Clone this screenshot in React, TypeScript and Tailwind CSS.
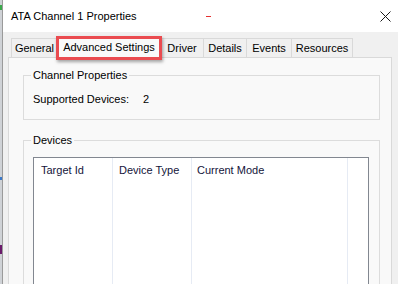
import React from "react";

const font = { fontFamily: '"Liberation Sans", Arial, sans-serif' };

const tabs = [
  { label: "General", w: "w-[47px]" },
  { label: "Advanced Settings", w: "w-[104px]", active: true },
  { label: "Driver", w: "w-[44px]" },
  { label: "Details", w: "w-[44px]" },
  { label: "Events", w: "w-[46px]" },
  { label: "Resources", w: "w-[62px]" },
];

function CloseIcon() {
  return (
    <svg width="11" height="11" viewBox="0 0 11 11" className="block">
      <path d="M0.5 0.5 L10.5 10.5 M10.5 0.5 L0.5 10.5" stroke="#1a1a1a" strokeWidth="1" fill="none" />
    </svg>
  );
}

function Tabs() {
  return (
    <div className="flex items-end h-[21px] pl-[3px]">
      {tabs.map((t, i) =>
        t.active ? (
          <div
            key={t.label}
            className={`relative z-10 -ml-px -mb-px h-[22px] ${t.w} flex items-center justify-center border border-b-0 border-[#d9d9d9] bg-[#f9f9f9] text-[11px] text-black`}
          >
            {t.label}
            <div className="absolute -left-[2px] -right-[2px] -top-[1px] -bottom-[2px] border-[3px] border-[#ea4b50] shadow-[1px_2px_3px_rgba(0,0,0,0.35)]" />
          </div>
        ) : (
          <div
            key={t.label}
            className={`${i > 0 ? "-ml-px" : ""} h-[19px] ${t.w} flex items-center justify-center border border-b-0 border-[#d9d9d9] bg-[#f0f0f0] text-[11px] text-black`}
          >
            {t.label}
          </div>
        )
      )}
    </div>
  );
}

function ListView() {
  const cols = [
    { label: "Target Id", w: "w-[79px]", pl: "pl-[7px]" },
    { label: "Device Type", w: "w-[79px]", pl: "pl-[6px]" },
    { label: "Current Mode", w: "w-[156px]", pl: "pl-[5px]" },
  ];
  return (
    <div className="ml-[9px] mr-[10px] mt-[10px] h-[200px] flex border border-[#828790] bg-white">
      {cols.map((c) => (
        <div key={c.label} className={`${c.w} shrink-0 border-r border-[#e6ebf4] flex flex-col`}>
          <div className={`h-[25px] flex items-center ${c.pl} text-[11px] text-[#14143a]`}>{c.label}</div>
        </div>
      ))}
      <div className="flex-1" />
    </div>
  );
}

export default function App() {
  return (
    <div className="w-[398px] h-[284px] overflow-hidden flex bg-[#f0f0f0]" style={font}>
      <div className="w-[2px] shrink-0 flex flex-col bg-[#cfd2d6]">
        <div className="h-[5px]" />
        <div className="h-[5px] bg-[#3aa84a]" />
        <div className="h-[167px]" />
        <div className="h-[3px] bg-[#3b78c8]" />
        <div className="h-[65px]" />
        <div className="h-[9px] bg-[#6a1a6a]" />
      </div>
      <div className="flex-1 flex flex-col border-l border-[#9a9a9a]">
        <div className="relative h-[32px] shrink-0 flex items-center justify-between bg-white pl-[8px] pr-[7px]">
          <span className="text-[11px] text-black">ATA Channel 1 Properties</span>
          <div className="absolute left-[203px] top-[16px] w-[5px] h-[1px] bg-[#e53030]" />
          <CloseIcon />
        </div>
        <div className="flex-1 flex flex-col pt-[4px] pl-[5px] pr-[6px]">
          <Tabs />
          <div className="flex-1 flex flex-col border border-[#d9d9d9] bg-[#f9f9f9] pt-[10px] pl-[14px] pr-[11px]">
            <fieldset className="h-[52px] border border-[#dcdcdc]">
              <legend className="ml-[7px] px-[2px] text-[11px] leading-[14px] text-black">Channel Properties</legend>
              <div className="pt-[10px] pl-[9px] flex text-[11px] leading-[14px] text-black">
                <span>Supported Devices:</span>
                <span className="ml-[14px]">2</span>
              </div>
            </fieldset>
            <fieldset className="mt-[13px] h-[300px] border border-[#dcdcdc]">
              <legend className="ml-[7px] px-[2px] text-[11px] leading-[14px] text-black">Devices</legend>
              <ListView />
            </fieldset>
          </div>
        </div>
      </div>
    </div>
  );
}
